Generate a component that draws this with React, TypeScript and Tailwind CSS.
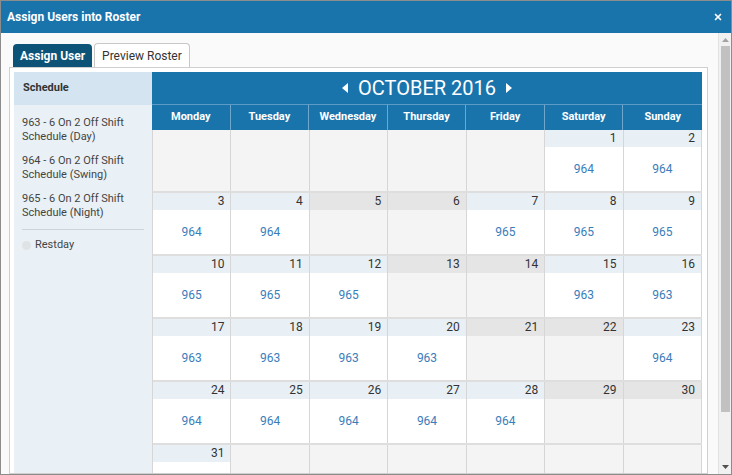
import React from 'react';
import { X } from 'lucide-react';

type Cell = { d?: number; v?: string; rest?: boolean };

const weeks: Cell[][] = [
  [{}, {}, {}, {}, {}, { d: 1, v: '964' }, { d: 2, v: '964' }],
  [{ d: 3, v: '964' }, { d: 4, v: '964' }, { d: 5, rest: true }, { d: 6, rest: true }, { d: 7, v: '965' }, { d: 8, v: '965' }, { d: 9, v: '965' }],
  [{ d: 10, v: '965' }, { d: 11, v: '965' }, { d: 12, v: '965' }, { d: 13, rest: true }, { d: 14, rest: true }, { d: 15, v: '963' }, { d: 16, v: '963' }],
  [{ d: 17, v: '963' }, { d: 18, v: '963' }, { d: 19, v: '963' }, { d: 20, v: '963' }, { d: 21, rest: true }, { d: 22, rest: true }, { d: 23, v: '964' }],
  [{ d: 24, v: '964' }, { d: 25, v: '964' }, { d: 26, v: '964' }, { d: 27, v: '964' }, { d: 28, v: '964' }, { d: 29, rest: true }, { d: 30, rest: true }],
  [{ d: 31 }, {}, {}, {}, {}, {}, {}],
];

const days = ['Monday', 'Tuesday', 'Wednesday', 'Thursday', 'Friday', 'Saturday', 'Sunday'];

const schedules = [
  '963 - 6 On 2 Off Shift Schedule (Day)',
  '964 - 6 On 2 Off Shift Schedule (Swing)',
  '965 - 6 On 2 Off Shift Schedule (Night)',
];

function DayCell({ cell }: { cell: Cell }) {
  // empty slot outside the month
  if (!cell.d) {
    return <div className="h-full border-r border-[#d6d6d6] bg-[#f4f4f4]" />;
  }
  const band = cell.rest ? 'bg-[#e5e5e5]' : 'bg-[#e9f0f5]';
  const body = cell.rest ? 'bg-[#f4f4f4]' : 'bg-white';
  return (
    <div className="h-full border-r border-[#d6d6d6] flex flex-col">
      <div className={`h-[17px] ${band} text-right pr-[6px] text-[12px] leading-[17px] text-[#333]`}>{cell.d}</div>
      <div className={`flex-1 ${body} flex items-center justify-center text-[12px] text-[#3a7dbb]`}>{cell.v}</div>
    </div>
  );
}

export default function App() {
  return (
    <div
      className="w-[732px] h-[475px] border border-[#8c8c8c] bg-[#fafafa] flex flex-col overflow-hidden"
      style={{ fontFamily: 'Roboto, "Noto Sans", sans-serif' }}
    >
      {/* title bar */}
      <div className="h-[32px] shrink-0 bg-[#1a74ac] flex items-center justify-between pl-[6px] pr-[8px]">
        <span className="text-white font-bold text-[12px]">Assign Users into Roster</span>
        <X size={10} strokeWidth={4} className="text-white" />
      </div>

      <div className="flex-1 flex min-h-0">
        <div className="flex-1 min-w-0 pl-[8px] pr-[10px] pt-[10px] flex flex-col">
          {/* tabs */}
          <div className="flex items-end gap-[2px] pl-[4px] h-[24px] shrink-0">
            <div className="h-[23px] px-[7px] bg-[#0d5377] rounded-t-[4px] text-white font-bold text-[12px] flex items-center">
              Assign User
            </div>
            <div className="h-[24px] px-[7px] bg-white border border-b-0 border-[#c8c8c8] rounded-t-[4px] text-[#333] text-[12px] flex items-center">
              Preview Roster
            </div>
          </div>

          {/* panel */}
          <div className="flex-1 min-h-0 border border-[#cfcfcf] bg-white p-[4px] pb-0 flex overflow-hidden">
            {/* sidebar */}
            <div className="w-[138px] shrink-0 bg-[#e9f1f6]">
              <div className="h-[33px] bg-[#d4e5f1] flex items-center pl-[9px] text-[11px] font-bold text-[#333]">Schedule</div>
              <div className="px-[8px] pt-[11px]">
                <div className="flex flex-col gap-[10px]">
                  {schedules.map((s) => (
                    <div key={s} className="text-[11px] leading-[14px] text-[#444]">{s}</div>
                  ))}
                </div>
                <div className="mt-[9px] border-t border-[#cdd3d7]" />
                <div className="mt-[7px] flex items-center gap-[4px] text-[11px] text-[#444]">
                  <span className="w-[9px] h-[9px] rounded-full bg-[#dfe3e6]" />
                  Restday
                </div>
              </div>
            </div>

            {/* calendar */}
            <div className="w-[550px] shrink-0 flex flex-col">
              <div className="h-[33px] shrink-0 bg-[#1a74ac] border-b border-[#5d9bc6] flex items-center justify-center gap-[10px] text-white">
                <svg width="6" height="10" viewBox="0 0 6 10"><path d="M6 0 L0 5 L6 10 Z" fill="white" /></svg>
                <span className="text-[20px] leading-none">OCTOBER 2016</span>
                <svg width="6" height="10" viewBox="0 0 6 10"><path d="M0 0 L6 5 L0 10 Z" fill="white" /></svg>
              </div>
              <div className="grid grid-cols-7 h-[25px] shrink-0 bg-[#1a74ac]">
                {days.map((d, i) => (
                  <div
                    key={d}
                    className={`flex items-center justify-center text-white font-bold text-[11px] ${i < 6 ? 'border-r border-[#6fa6cc]' : ''}`}
                  >
                    {d}
                  </div>
                ))}
              </div>
              <div className="border-l border-[#d6d6d6] shrink-0">
                {weeks.map((w, wi) => (
                  <div key={wi} className="grid grid-cols-7 h-[63px] border-b-2 border-[#dedede]">
                    {w.map((c, ci) => (
                      <DayCell key={ci} cell={c} />
                    ))}
                  </div>
                ))}
              </div>
            </div>
          </div>
        </div>

        {/* scrollbar */}
        <div className="w-[13px] shrink-0 bg-[#f1f1f1] border-l border-[#e2e2e2] flex flex-col items-center">
          <svg className="mt-[5px]" width="7" height="4" viewBox="0 0 7 4"><path d="M0 4 L3.5 0 L7 4 Z" fill="#a3a3a3" /></svg>
          <div className="mt-[4px] w-[9px] h-[366px] bg-[#c1c1c1]" />
          <div className="flex-1" />
          <svg className="mb-[5px]" width="7" height="4" viewBox="0 0 7 4"><path d="M0 0 L3.5 4 L7 0 Z" fill="#505050" /></svg>
        </div>
      </div>
    </div>
  );
}
